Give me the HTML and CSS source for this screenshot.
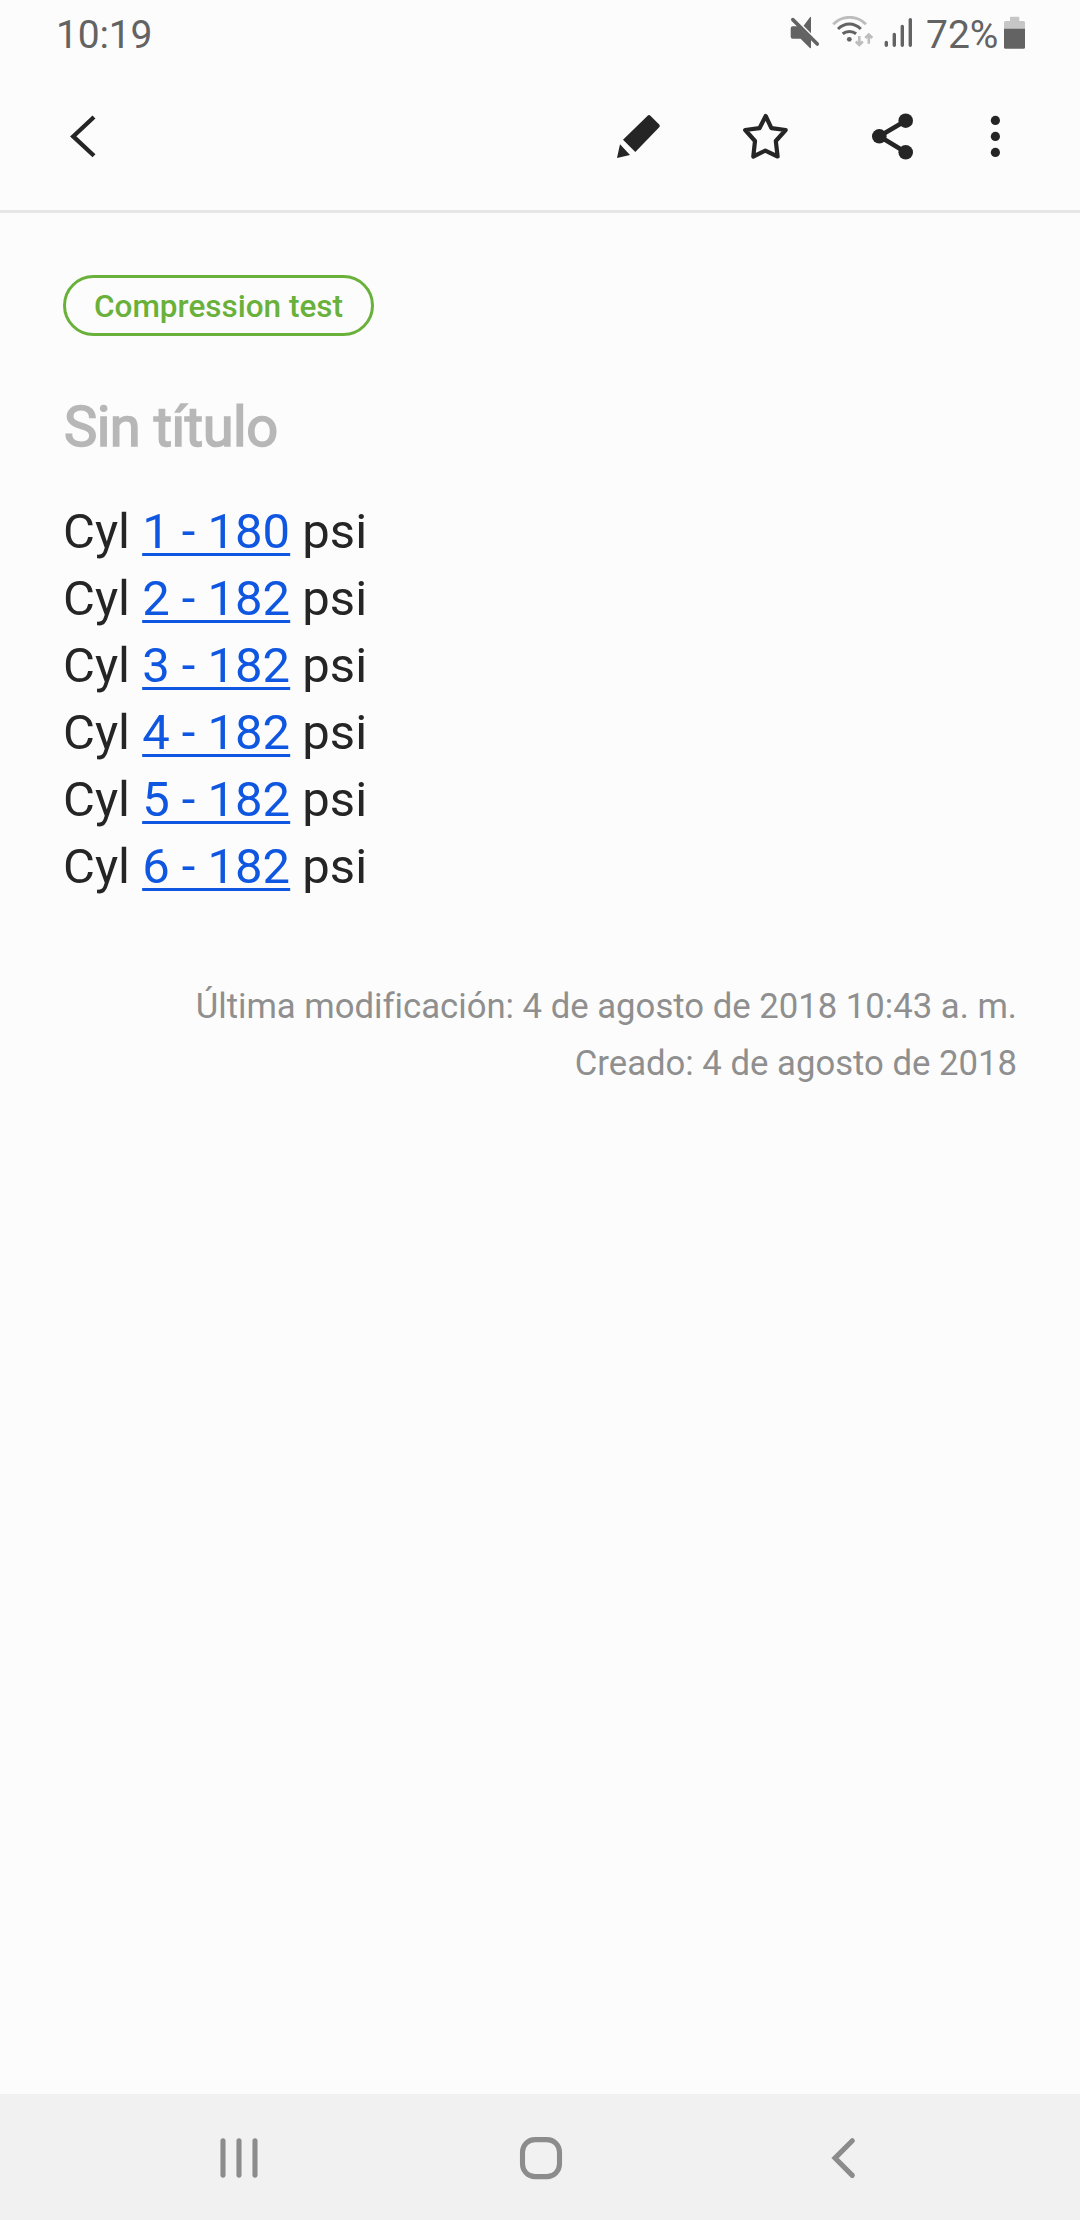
FILE: index.html
```html
<!DOCTYPE html>
<html lang="es">
	<head>
		<meta charset="utf-8">
		<title>Sin título</title>
		<link rel="stylesheet" href="styles.css">
	</head>
	<body>
		<div class="statusbar">
			<span class="clock">10:19</span>
			<svg class="mute" width="30" height="34" viewBox="0 0 30 34">
				<path class="fill" d="M21 17.3V1.4Q21 .3 20 1.2L13.6 9.7ZM2.7 10.3H7.5L21 23.6V31.4Q20.8 32.9 19.6 31.8L10.6 22.7H2.7Q.7 22.7.7 20.7V12.3Q.7 10.3 2.7 10.3Z"/>
				<path class="line" stroke-width="3.6" stroke-linecap="round" d="M2.8 3.6 27.3 28"/>
			</svg>
			<svg class="wifi" width="42" height="34" viewBox="0 0 42 34">
				<path class="line faint" stroke-width="2.8" d="M1.2 8.2Q8.2 1.3 17.6 1.3T34 8.2"/>
				<path class="line" stroke-width="3" d="M6 13Q11 7.9 17.4 7.9T28.8 13M10.7 17.8Q13.5 15.6 17.4 15.6T24.1 17.8"/>
				<circle class="fill" cx="17.3" cy="23.3" r="2.4"/>
				<path class="line faint" stroke-width="2.6" d="M27.3 20V29M23.8 25.5 27.3 29 30.8 25.5M36.8 27.8V18.5M33.3 22 36.8 18.5 40.3 22"/>
			</svg>
			<svg class="signal" width="30" height="34" viewBox="0 0 30 34">
				<path class="line" stroke-width="3.4" stroke-linecap="round" d="M2.3 26.4V29.3M10.3 18.4V29.3M18.3 10.4V29.3M26.3 3.6V29.3"/>
			</svg>
			<span class="percent">72%</span>
			<svg class="battery" width="21" height="34" viewBox="0 0 21 34">
				<path fill="#c6c6c6" d="M6 5V1.7Q6 .7 7 .7H14.3Q15.3.7 15.3 1.7V5H19.5Q21 5 21 6.5V13H0V6.5Q0 5 1.5 5Z"/>
				<path class="fill" d="M0 12.8H21V31.2Q21 32.7 19.5 32.7H1.5Q0 32.7 0 31.2Z"/>
			</svg>
		</div>
		<div class="toolbar">
			<svg class="icon back" viewBox="0 0 48 48">
				<path class="stroke" stroke-width="4.3" d="M34 5 13.2 24.4 34 43.8"/>
			</svg>
			<svg class="icon" viewBox="0 0 48 48">
				<path d="M33.6 3.8Q35 2.4 36.4 3.8L45.2 12.4Q46.6 13.8 45.2 15.2L21.3 40 9 27.7ZM6 32.3 16 43 3 46Z"/>
			</svg>
			<svg class="icon" viewBox="0 0 48 48">
				<path class="stroke" stroke-width="4.2" stroke-linejoin="round" d="M24.7 4 30.4 16.2 44.7 18 34.8 29 36.6 44.5 24.3 38.6 12.3 44.5 14 29 4.2 18 18.5 16.2Z"/>
			</svg>
			<svg class="icon" viewBox="0 0 48 48">
				<path class="stroke" stroke-width="4.6" d="M37.7 8.7 11.3 24.3 37.7 40.3"/>
				<circle cx="11.3" cy="24.3" r="7.3"/>
				<circle cx="37.7" cy="8.7" r="7.3"/>
				<circle cx="37.7" cy="40.3" r="7.3"/>
			</svg>
			<svg class="icon more" viewBox="0 0 48 48">
				<circle cx="24.4" cy="8.4" r="4.6"/>
				<circle cx="24.4" cy="24.4" r="4.6"/>
				<circle cx="24.4" cy="40.4" r="4.6"/>
			</svg>
		</div>
		<div class="note">
			<span class="tag">Compression test</span>
			<h1>Sin título</h1>
			<div class="text">
				<p>Cyl <a href="#">1 - 180</a> psi</p>
				<p>Cyl <a href="#">2 - 182</a> psi</p>
				<p>Cyl <a href="#">3 - 182</a> psi</p>
				<p>Cyl <a href="#">4 - 182</a> psi</p>
				<p>Cyl <a href="#">5 - 182</a> psi</p>
				<p>Cyl <a href="#">6 - 182</a> psi</p>
			</div>
			<div class="dates">
				<p>Última modificación: 4 de agosto de 2018 10:43 a. m.</p>
				<p>Creado: 4 de agosto de 2018</p>
			</div>
		</div>
		<div class="navbar">
			<svg class="icon" viewBox="0 0 48 48">
				<path stroke-linecap="round" d="M8 6.9V41.1M24 6.9V41.1M40 6.9V41.1"/>
			</svg>
			<svg class="icon" viewBox="0 0 48 48">
				<rect x="5.5" y="5.6" width="37" height="37" rx="12.5"/>
			</svg>
			<svg class="icon" viewBox="0 0 48 48">
				<path stroke-linecap="round" d="M33.3 6.8 16 24.1 33.3 41.4"/>
			</svg>
		</div>
	</body>
</html>
```
FILE: styles.css
```css
:root {
	--page: #fcfcfc;
	--ink: #252525;
	--status: #636363;
	--green: #69b13a;
	--link: #0f56e0;
	--nav: #8c8c8c;
}
* {box-sizing: border-box;}
body {
	margin: 0;
	height: 2220px;
	display: flex;
	flex-direction: column;
	background: var(--page);
	color: var(--ink);
	font-family: Roboto, sans-serif;
}
h1, p {margin: 0; font-weight: 400;}
svg {display: block; flex: none;}
.icon {width: 48px; height: 48px; fill: var(--ink);}
.stroke {fill: none; stroke: var(--ink);}

/* status bar */
.statusbar {
	height: 62px;
	padding: 16px 55px 0 56px;
	display: flex;
	align-items: flex-start;
	color: var(--status);
	font-size: 39px;
	line-height: 39px;
}
.clock {margin-right: auto; letter-spacing: -.2px;}
.wifi {margin-left: 12px;}
.signal {margin-left: 10px;}
.percent {width: 79px; margin-left: 11px; padding-left: 1px;}
.fill {fill: var(--status);}
.line {fill: none; stroke: var(--status);}
.faint {stroke: #bdbdbd;}

/* toolbar */
.toolbar {
	height: 151px;
	padding: 0 61px 0 60px;
	display: flex;
	align-items: center;
	gap: 79px;
	border-bottom: 3px solid #e6e6e6;
}
.back {margin-right: auto;}
.more {margin-left: -24px;}

/* note */
.note {
	flex: 1;
	padding: 62px 63px 0;
}
.tag {
	display: block;
	width: 311px;
	height: 61px;
	border: 3px solid var(--green);
	border-radius: 31px;
	color: var(--green);
	font-size: 31.5px;
	font-weight: 500;
	line-height: 57px;
	text-align: center;
}
h1 {
	margin-top: 56px;
	padding-left: 1px;
	color: #b7b7b7;
	font-size: 56px;
	line-height: 70px;
	letter-spacing: -.5px;
	-webkit-text-stroke: 1.6px #b7b7b7;
}
.text {
	margin-top: 36px;
	font-size: 49px;
	line-height: 67px;
}
.text a {
	color: var(--link);
	text-decoration-thickness: 3px;
	text-underline-offset: 5px;
}
.dates {
	margin-top: 78px;
	color: #8f8f8f;
	font-size: 34.7px;
	font-variant-ligatures: none;
	line-height: 57px;
	text-align: right;
}

/* navigation bar */
.navbar {
	height: 126px;
	padding: 2px 0 0 215px;
	display: flex;
	align-items: center;
	gap: 254px;
	background: #f1f1f1;
}
.navbar .icon {fill: none; stroke: var(--nav); stroke-width: 5.1;}
```
